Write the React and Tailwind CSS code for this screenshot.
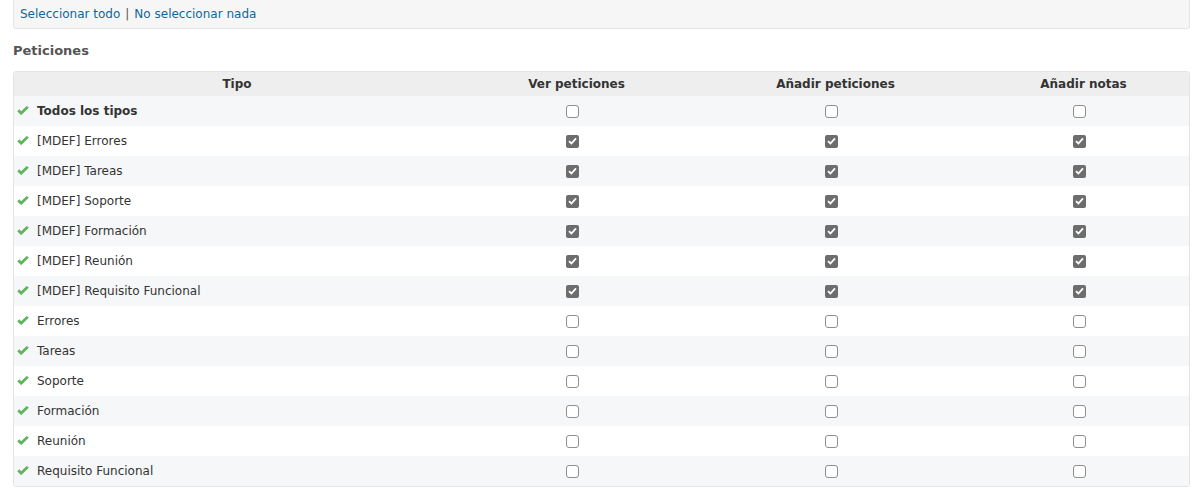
import React from 'react';

// Redmine-style role permissions table for issue trackers

const trackers = [
  { name: 'Todos los tipos', bold: true, checked: false },
  { name: '[MDEF] Errores', checked: true },
  { name: '[MDEF] Tareas', checked: true },
  { name: '[MDEF] Soporte', checked: true },
  { name: '[MDEF] Formación', checked: true },
  { name: '[MDEF] Reunión', checked: true },
  { name: '[MDEF] Requisito Funcional', checked: true },
  { name: 'Errores', checked: false },
  { name: 'Tareas', checked: false },
  { name: 'Soporte', checked: false },
  { name: 'Formación', checked: false },
  { name: 'Reunión', checked: false },
  { name: 'Requisito Funcional', checked: false },
];

const GreenCheck = () => (
  <svg width="12" height="10" viewBox="0 0 12 10" className="shrink-0">
    <path
      d="M0.6 5.3 L4.2 8.8 L11.4 1.8 L9.8 0.2 L4.2 5.6 L2.2 3.7 Z"
      fill="#5cb85c"
      stroke="#449d44"
      strokeWidth="0.5"
      strokeLinejoin="round"
    />
  </svg>
);

const Box = ({ checked }) =>
  checked ? (
    <span className="inline-flex items-center justify-center w-[13px] h-[13px] rounded-[2px] bg-[#6d6d6d] align-middle">
      <svg width="9" height="8" viewBox="0 0 9 8">
        <path d="M1 4.2 L3.4 6.5 L8 1.3" fill="none" stroke="#fff" strokeWidth="1.8" />
      </svg>
    </span>
  ) : (
    <span className="inline-block w-[13px] h-[13px] rounded-[3px] border border-[#8f8f8f] bg-white align-middle" />
  );

export default function App() {
  return (
    <div className="bg-white min-h-[500px] text-[12px] text-[#333] font-['DejaVu_Sans',Verdana,sans-serif] px-[13px]">
      <div className="border border-[#e4e4e4] border-t-0 rounded-b-[3px] bg-[#f6f6f6] h-[29px] pl-[6px] pr-2 flex items-center">
        <a href="#" className="text-[#169]">Seleccionar todo</a>
        <span className="mx-[5px] text-[#555]">|</span>
        <a href="#" className="text-[#169]">No seleccionar nada</a>
      </div>

      <h3 className="font-bold text-[13px] text-[#555] mt-[13px] mb-[11px] leading-[18px]">Peticiones</h3>

      <div className="border border-[#e4e4e4] rounded-[3px] overflow-hidden">
        <table className="w-full border-collapse table-fixed">
          <colgroup>
            <col className="w-[437px]" />
            <col className="w-[242px]" />
            <col className="w-[276px]" />
            <col />
          </colgroup>
          <thead>
            <tr className="bg-[#eeeeee] h-[24px]">
              <th className="font-bold text-center text-[#333] pl-[9px]">Tipo</th>
              <th className="font-bold text-center text-[#333] pl-[9px]">Ver peticiones</th>
              <th className="font-bold text-center text-[#333] pl-[9px]">Añadir peticiones</th>
              <th className="font-bold text-center text-[#333] pl-[9px]">Añadir notas</th>
            </tr>
          </thead>
          <tbody>
            {trackers.map((t, i) => (
              <tr key={t.name} className={`h-[30px] ${i % 2 === 0 ? 'bg-[#f6f7f8]' : 'bg-white'}`}>
                <td className="pl-[3px]">
                  <div className="flex items-center gap-[8px]">
                    <GreenCheck />
                    <span className={t.bold ? 'font-bold' : ''}>{t.name}</span>
                  </div>
                </td>
                <td className="text-center leading-none"><Box checked={t.checked} /></td>
                <td className="text-center leading-none"><Box checked={t.checked} /></td>
                <td className="text-center leading-none"><Box checked={t.checked} /></td>
              </tr>
            ))}
          </tbody>
        </table>
      </div>
    </div>
  );
}
